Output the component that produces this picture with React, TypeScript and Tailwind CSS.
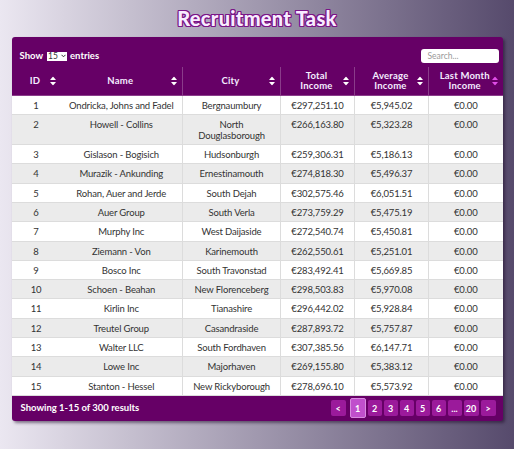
import React from "react";

const rows: [number, string, string, string, string, string][] = [
  [1, "Ondricka, Johns and Fadel", "Bergnaumbury", "€297,251.10", "€5,945.02", "€0.00"],
  [2, "Howell - Collins", "North Douglasborough", "€266,163.80", "€5,323.28", "€0.00"],
  [3, "Gislason - Bogisich", "Hudsonburgh", "€259,306.31", "€5,186.13", "€0.00"],
  [4, "Murazik - Ankunding", "Ernestinamouth", "€274,818.30", "€5,496.37", "€0.00"],
  [5, "Rohan, Auer and Jerde", "South Dejah", "€302,575.46", "€6,051.51", "€0.00"],
  [6, "Auer Group", "South Verla", "€273,759.29", "€5,475.19", "€0.00"],
  [7, "Murphy Inc", "West Daijaside", "€272,540.74", "€5,450.81", "€0.00"],
  [8, "Ziemann - Von", "Karinemouth", "€262,550.61", "€5,251.01", "€0.00"],
  [9, "Bosco Inc", "South Travonstad", "€283,492.41", "€5,669.85", "€0.00"],
  [10, "Schoen - Beahan", "New Florenceberg", "€298,503.83", "€5,970.08", "€0.00"],
  [11, "Kirlin Inc", "Tianashire", "€296,442.02", "€5,928.84", "€0.00"],
  [12, "Treutel Group", "Casandraside", "€287,893.72", "€5,757.87", "€0.00"],
  [13, "Walter LLC", "South Fordhaven", "€307,385.56", "€6,147.71", "€0.00"],
  [14, "Lowe Inc", "Majorhaven", "€269,155.80", "€5,383.12", "€0.00"],
  [15, "Stanton - Hessel", "New Rickyborough", "€278,696.10", "€5,573.92", "€0.00"],
];

function SortIcon({ active }: { active?: boolean }) {
  const c = active ? "#e04ee8" : "#ffffff";
  return (
    <svg width="6" height="9" viewBox="0 0 6 9" className="absolute right-[5px] top-1/2 -translate-y-1/2">
      <polygon points="3,0 6,3.5 0,3.5" fill={c} />
      <polygon points="0,5.5 6,5.5 3,9" fill={c} />
    </svg>
  );
}

const headers: { label: React.ReactNode; border: boolean; active?: boolean }[] = [
  { label: "ID", border: false },
  { label: "Name", border: false },
  { label: "City", border: true },
  { label: <>Total<br />Income</>, border: true },
  { label: <>Average<br />Income</>, border: true },
  { label: <>Last Month<br />Income</>, border: true, active: true },
];

export default function App() {
  return (
    <div
      className="w-[514px] h-[449px] overflow-hidden bg-[linear-gradient(to_right,#ebe7f1,#564a6c)] flex flex-col items-center"
      style={{ fontFamily: "Lato, 'Noto Sans', sans-serif" }}
    >
      <h1
        className="mt-[5px] h-[27px] text-[20px] leading-[26px] font-black text-[#f8ecff] tracking-[0.3px]"
        style={{
          textShadow:
            "1px 0 0 #7a1487, -1px 0 0 #7a1487, 0 1px 0 #7a1487, 0 -1px 0 #7a1487, 1px 1px 0 #7a1487, -1px -1px 0 #7a1487, 1px -1px 0 #7a1487, -1px 1px 0 #7a1487",
        }}
      >
        Recruitment Task
      </h1>
      <div className="mt-[5px] w-[491px] bg-[#660066] rounded-[3px] shadow-[2px_2px_3px_rgba(30,10,40,0.5)] overflow-hidden">
        <div className="flex items-center justify-between pt-[8px] pl-[8px] pr-[4px] h-[22px] box-content">
          <div className="flex items-center text-[9.5px] font-bold text-white">
            <span>Show</span>
            <span className="ml-[4px] mr-[3px] w-[20px] h-[9px] bg-white text-[#333] flex items-center justify-between px-[1px] text-[8.5px] font-normal leading-none">
              15
              <svg width="5" height="4" viewBox="0 0 5 4">
                <polyline points="0.5,0.8 2.5,2.8 4.5,0.8" fill="none" stroke="#333" strokeWidth="1" />
              </svg>
            </span>
            <span>entries</span>
          </div>
          <div className="w-[78px] h-[14px] bg-white rounded-[3px] flex items-center pl-[7px] text-[8.5px] text-[#9a9a9a]">
            Search...
          </div>
        </div>
        <table className="w-[491px] table-fixed border-collapse">
          <colgroup>
            <col className="w-[49px]" />
            <col className="w-[122px]" />
            <col className="w-[98px]" />
            <col className="w-[74px]" />
            <col className="w-[74px]" />
            <col className="w-[74px]" />
          </colgroup>
          <thead>
            <tr className="h-[28px] border-b border-[#8a3c8a]">
              {headers.map((h, i) => (
                <th
                  key={i}
                  className={`relative pl-[6px] pr-[12px] text-center align-middle text-[9.5px] leading-[10px] font-bold text-[#f4ecff] tracking-[0.2px] whitespace-nowrap ${i >= 3 ? "pl-[4px] pr-[8px]" : ""} ${h.border ? "border-l border-[#8a3c8a]" : ""}`}
                >
                  <span className="relative left-[2px]">{h.label}</span>
                  <SortIcon active={h.active} />
                </th>
              ))}
            </tr>
          </thead>
          <tbody>
            {rows.map((r, idx) => (
              <tr
                key={r[0]}
                className={`${idx % 2 === 0 ? "bg-white" : "bg-[#ebebeb]"} border-b border-[#dcdcdc] text-[9.5px] leading-[11px] tracking-[-0.15px] text-[#333]`}
              >
                {r.map((c, j) => (
                  <td
                    key={j}
                    className={`text-center align-top pt-[4px] pb-[3.3px] px-[4px] ${j >= 2 ? "border-l border-[#dcdcdc]" : ""}`}
                  >
                    {c}
                  </td>
                ))}
              </tr>
            ))}
          </tbody>
        </table>
        <div className="h-[25px] flex items-center justify-between pl-[9px] pr-[7px]">
          <span className="text-[9.5px] font-bold text-white">Showing 1-15 of 300 results</span>
          <div className="flex items-center gap-[2px]">
            <div className="w-[15px] h-[16px] mr-[2px] bg-[#9b1a9b] rounded-[2px] flex items-center justify-center text-white text-[9px] font-bold">&lt;</div>
            <div className="w-[16px] h-[20px] bg-[#c04fcc] border border-[#d88ae0] rounded-[2px] flex items-center justify-center text-white text-[9px] font-bold">1</div>
            {["2", "3", "4", "5", "6", "...", "20"].map((p) => (
              <div key={p} className={`${p === "20" ? "w-[15px]" : "w-[14px]"} h-[16px] bg-[#9b1a9b] rounded-[2px] flex items-center justify-center text-white text-[9px] font-bold`}>
                {p}
              </div>
            ))}
            <div className="w-[15px] h-[16px] bg-[#9b1a9b] rounded-[2px] flex items-center justify-center text-white text-[9px] font-bold">&gt;</div>
          </div>
        </div>
      </div>
    </div>
  );
}
